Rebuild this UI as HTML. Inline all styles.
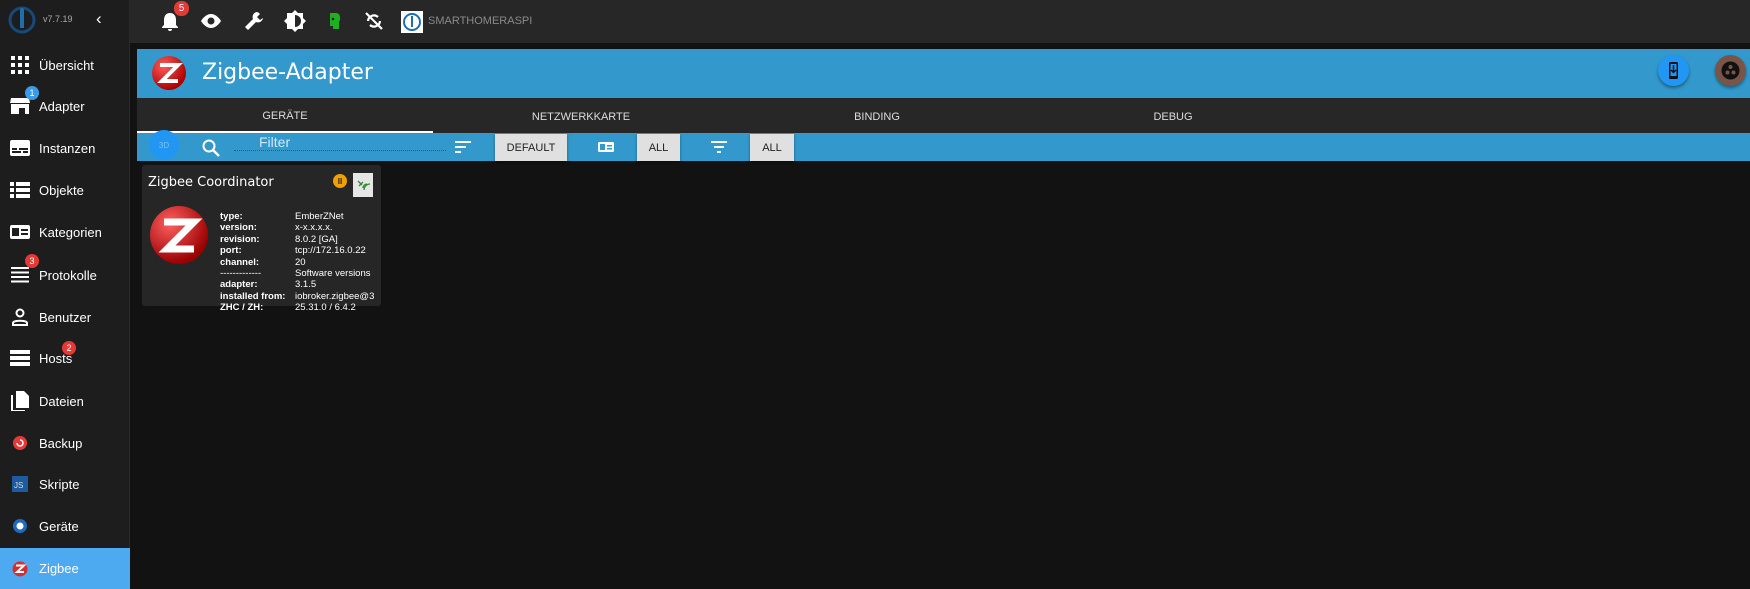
<!DOCTYPE html>
<html><head><meta charset="utf-8"><style>
*{box-sizing:border-box;margin:0;padding:0}
body{width:1750px;height:589px;background:#121212;font-family:"Liberation Sans",sans-serif;position:relative;overflow:hidden;color:#fff}
.side{position:absolute;left:0;top:0;width:130px;height:589px;background:#1d1d1d;border-right:1px solid #2a2a2a}
.item{position:absolute;left:0;width:130px;height:42px;display:flex;align-items:center;font-size:13px;color:#fff}
.item .ic{width:20px;height:18px;margin-left:10px;margin-right:9px;display:flex;align-items:center;justify-content:center}
.badge{position:absolute;width:14px;height:14px;border-radius:7px;font-size:9px;display:flex;align-items:center;justify-content:center;color:#fff}
.top{position:absolute;left:130px;top:0;right:0;height:43px;background:#272727}
.hdr{position:absolute;left:137px;top:49px;right:0;height:49px;background:#3399cc}
.tabs{position:absolute;left:137px;top:98px;right:0;height:35px;background:#272727}
.tab{position:absolute;top:2px;width:296px;height:33px;display:flex;align-items:center;justify-content:center;font-size:11px;color:#ddd}
.tool{position:absolute;left:137px;top:133px;right:0;height:28px;background:#3399cc}
.btn{position:absolute;top:134px;height:27px;background:#e0e0e0;color:#222;font-size:11px;display:flex;align-items:center;justify-content:center;box-shadow:0 1px 3px rgba(0,0,0,.4)}
.card{position:absolute;left:142px;top:165px;width:239px;height:141px;background:#262626;border-radius:3px}
.kv{position:absolute;font-size:9.5px;line-height:11.4px;white-space:nowrap}
</style></head><body>
<div class="side">
 <svg style="position:absolute;left:8px;top:6px" width="28" height="28" viewBox="0 0 28 28"><circle cx="14" cy="14" r="12" fill="none" stroke="#164a7a" stroke-width="3"/><rect x="12" y="5" width="4" height="17" fill="#1d6fb0"/><circle cx="14" cy="4" r="2" fill="#1d6fb0"/></svg>
 <div style="position:absolute;left:43px;top:14px;font-size:9px;color:#aaa">v7.7.19</div>
 <div style="position:absolute;left:96px;top:9px;font-size:17px;color:#fff">‹</div>
 <div class="item" style="top:44px"><div class="ic"><svg width="18" height="18"><g fill="#fff"><rect x="0" y="0" width="4" height="4"/><rect x="7" y="0" width="4" height="4"/><rect x="14" y="0" width="4" height="4"/><rect x="0" y="7" width="4" height="4"/><rect x="7" y="7" width="4" height="4"/><rect x="14" y="7" width="4" height="4"/><rect x="0" y="14" width="4" height="4"/><rect x="7" y="14" width="4" height="4"/><rect x="14" y="14" width="4" height="4"/></g></svg></div>Übersicht</div>
 <div class="item" style="top:85px"><div class="ic"><svg width="20" height="16"><path d="M1 0h18l1 5H0z M1 6h18v10h-4v-6H9v6H1z" fill="#fff"/></svg></div>Adapter</div>
 <div class="badge" style="left:25px;top:86px;background:#3a9be8">1</div>
 <div class="item" style="top:127px"><div class="ic"><svg width="20" height="16"><rect width="20" height="16" rx="2" fill="#fff"/><rect x="2" y="8" width="5" height="2" fill="#1d1d1d"/><rect x="9" y="8" width="9" height="2" fill="#1d1d1d"/><rect x="2" y="11" width="9" height="2" fill="#1d1d1d"/><rect x="13" y="11" width="5" height="2" fill="#1d1d1d"/></svg></div>Instanzen</div>
 <div class="item" style="top:169px"><div class="ic"><svg width="20" height="16" fill="#fff"><rect x="0" y="0" width="4" height="4"/><rect x="6" y="0" width="14" height="4"/><rect x="0" y="6" width="4" height="4"/><rect x="6" y="6" width="14" height="4"/><rect x="0" y="12" width="4" height="4"/><rect x="6" y="12" width="14" height="4"/></svg></div>Objekte</div>
 <div class="item" style="top:211px"><div class="ic"><svg width="20" height="14"><rect width="20" height="14" rx="2" fill="#fff"/><rect x="2" y="3" width="7" height="8" fill="#1d1d1d"/><rect x="11" y="4" width="7" height="2" fill="#1d1d1d"/><rect x="11" y="8" width="7" height="2" fill="#1d1d1d"/></svg></div>Kategorien</div>
 <div class="item" style="top:254px"><div class="ic"><svg width="18" height="16" fill="#fff"><rect y="0" width="18" height="2"/><rect y="4.5" width="18" height="2"/><rect y="9" width="18" height="2"/><rect y="13.5" width="18" height="2"/></svg></div>Protokolle</div>
 <div class="badge" style="left:25px;top:254px;background:#e53935">3</div>
 <div class="item" style="top:296px"><div class="ic"><svg width="18" height="18"><circle cx="9" cy="5" r="3.5" fill="none" stroke="#fff" stroke-width="2"/><path d="M2 17v-2c0-3 14-3 14 0v2z" fill="none" stroke="#fff" stroke-width="2"/></svg></div>Benutzer</div>
 <div class="item" style="top:337px"><div class="ic"><svg width="20" height="16" fill="#fff"><rect y="0" width="20" height="4"/><rect y="6" width="20" height="4"/><rect y="12" width="20" height="4"/></svg></div>Hosts</div>
 <div class="badge" style="left:62px;top:341px;background:#e53935">2</div>
 <div class="item" style="top:380px"><div class="ic"><svg width="18" height="20"><path d="M5 0h8l5 5v12H5z" fill="#fff"/><path d="M1 4v16h13" fill="none" stroke="#fff" stroke-width="2"/></svg></div>Dateien</div>
 <div class="item" style="top:422px"><div class="ic"><svg width="16" height="16"><circle cx="8" cy="8" r="7" fill="#e53935"/><path d="M5 8a3 3 0 1 0 3-3" fill="none" stroke="#fff" stroke-width="1.5"/></svg></div>Backup</div>
 <div class="item" style="top:463px"><div class="ic"><svg width="16" height="16"><rect width="16" height="16" fill="#1e5aa0"/><text x="2" y="12" font-size="8" fill="#ddd" font-family="Liberation Sans">JS</text></svg></div>Skripte</div>
 <div class="item" style="top:505px"><div class="ic"><svg width="16" height="16"><circle cx="8" cy="8" r="7" fill="#1e6ac0"/><circle cx="8" cy="8" r="3.5" fill="#fff"/></svg></div>Geräte</div>
 <div class="item" style="top:548px;height:41px;background:#4eaaf0"><div class="ic"><svg width="16" height="16"><circle cx="8" cy="8" r="7.5" fill="#d32f2f"/><path d="M4 4.5h8L5 11h7" fill="none" stroke="#fff" stroke-width="2"/></svg></div>Zigbee</div>
</div>
<div class="top">
 <svg style="position:absolute;left:30px;top:11px" width="20" height="21"><path d="M10 2c-4 0-6 3-6 7v5l-2 2v1h16v-1l-2-2V9c0-4-2-7-6-7zM8 18a2 2 0 0 0 4 0z" fill="#fff"/></svg>
 <div class="badge" style="left:44px;top:1px;width:15px;height:15px;background:#e53935;font-size:10px">5</div>
 <svg style="position:absolute;left:69px;top:12px" width="24" height="18"><path d="M12 2C6 2 2 9 2 9s4 7 10 7 10-7 10-7-4-7-10-7z" fill="#fff"/><circle cx="12" cy="9" r="3.5" fill="#272727"/></svg>
 <svg style="position:absolute;left:113px;top:10px" width="22" height="22"><path d="M14 2a5 5 0 0 0-4 7L2 17l3 3 8-8a5 5 0 0 0 7-4l-3 2-3-3 3-3a5 5 0 0 0-3-2z" fill="#fff"/></svg>
 <svg style="position:absolute;left:154px;top:10px" width="22" height="22"><path d="M11 0l3 3h5v5l3 3-3 3v5h-5l-3 3-3-3H3v-5l-3-3 3-3V3h5z" fill="#fff"/><path d="M11 5a6 6 0 0 1 0 12z" fill="#272727"/></svg>
 <svg style="position:absolute;left:197px;top:11px" width="14" height="20"><path d="M3 2h6a4 4 0 0 1 4 4v3l-1 2v7H6v-3H3z" fill="#1db21d"/><circle cx="6" cy="8" r="1.2" fill="#000"/></svg>
 <svg style="position:absolute;left:234px;top:11px" width="20" height="20"><path d="M4 10a6 6 0 0 1 10-4M16 10a6 6 0 0 1-10 4M2 2l16 16" fill="none" stroke="#fff" stroke-width="2.2"/></svg>
 <div style="position:absolute;left:271px;top:11px;width:22px;height:22px;background:#fff"><svg width="22" height="22"><circle cx="11" cy="11" r="8" fill="none" stroke="#1d6fb0" stroke-width="2"/><rect x="10" y="5" width="2" height="11" fill="#1d6fb0"/></svg></div>
 <div style="position:absolute;left:298px;top:15px;font-size:11px;color:#8a8a8a">SMARTHOMERASPI</div>
</div>
<div class="hdr">
 <svg style="position:absolute;left:14px;top:6px" width="36" height="36"><defs><radialGradient id="g" cx="35%" cy="30%" r="70%"><stop offset="0" stop-color="#ff5a5a"/><stop offset="1" stop-color="#a00"/></radialGradient></defs><circle cx="18" cy="18" r="17" fill="url(#g)"/><path d="M9 10h18L11 26h16" fill="none" stroke="#fff" stroke-width="4"/></svg>
 <div style="position:absolute;left:65px;top:11px;font-size:22px;color:#fff;font-family:'DejaVu Sans',sans-serif">Zigbee-Adapter</div>
 <div style="position:absolute;left:1521px;top:6px;width:31px;height:31px;border-radius:50%;background:#2196f3;box-shadow:0 2px 3px rgba(0,0,0,.4)"><svg width="31" height="31"><rect x="11" y="7" width="9" height="17" rx="1.5" fill="#111"/><rect x="12.5" y="9" width="6" height="12" fill="#2196f3"/><path d="M15.5 10v7M13 15l2.5 2.5L18 15" stroke="#111" fill="none" stroke-width="1.5"/></svg></div>
 <div style="position:absolute;left:1578px;top:6px;width:31px;height:31px;border-radius:50%;background:#795548;box-shadow:0 2px 3px rgba(0,0,0,.4)"><svg width="31" height="31"><circle cx="15.5" cy="15.5" r="9" fill="#111"/><circle cx="15.5" cy="12" r="2" fill="#795548"/><circle cx="12.5" cy="17.5" r="2" fill="#795548"/><circle cx="18.5" cy="17.5" r="2" fill="#795548"/></svg></div>
</div>
<div class="tabs">
 <div class="tab" style="left:0;border-bottom:2px solid #fff">GERÄTE</div>
 <div class="tab" style="left:296px">NETZWERKKARTE</div>
 <div class="tab" style="left:592px">BINDING</div>
 <div class="tab" style="left:888px">DEBUG</div>
</div>
<div class="tool">
 <div style="position:absolute;left:12px;top:-3px;width:30px;height:30px;border-radius:50%;background:#2196f3;font-size:8px;color:#7cc0f8;display:flex;align-items:center;justify-content:center">3D</div>
 <svg style="position:absolute;left:64px;top:5px" width="20" height="20"><circle cx="8" cy="8" r="5.5" fill="none" stroke="#fff" stroke-width="2"/><path d="M12 12l6 6" stroke="#fff" stroke-width="2.4"/></svg>
 <div style="position:absolute;left:97px;top:-2px;width:212px;height:20px;border-bottom:1px dotted #1f5f8a"></div>
 <div style="position:absolute;left:122px;top:1px;font-size:14px;color:#cfe6f5">Filter</div>
 <svg style="position:absolute;left:318px;top:8px" width="16" height="12" fill="#fff"><rect width="16" height="2"/><rect y="5" width="11" height="2"/><rect y="10" width="6" height="2"/></svg>
 <svg style="position:absolute;left:461px;top:9px" width="16" height="10"><rect width="16" height="10" rx="1.5" fill="#fff"/><rect x="2" y="2" width="5" height="6" fill="#3399cc"/><rect x="9" y="3" width="5" height="1.5" fill="#3399cc"/><rect x="9" y="6" width="5" height="1.5" fill="#3399cc"/></svg>
 <svg style="position:absolute;left:574px;top:8px" width="16" height="12" fill="#fff"><rect width="16" height="2"/><rect x="3" y="5" width="10" height="2"/><rect x="6" y="10" width="4" height="2"/></svg>
</div>
<div class="btn" style="left:495px;width:72px">DEFAULT</div>
<div class="btn" style="left:637px;width:43px">ALL</div>
<div class="btn" style="left:750px;width:44px">ALL</div>
<div class="card">
 <div style="position:absolute;left:6px;top:10px;font-size:13px;font-family:'DejaVu Sans',sans-serif">Zigbee Coordinator</div>
 <div style="position:absolute;left:191px;top:9px;width:14px;height:14px;border-radius:50%;background:#f0a000;font-size:8px;color:#222;display:flex;align-items:center;justify-content:center;font-weight:bold">II</div>
 <div style="position:absolute;left:211px;top:8px;width:20px;height:24px;background:#e6e6e6"><svg width="20" height="24"><path d="M5 8l4 4M6 13l4-4M10 15a4 4 0 0 1 4-4M11 17a6 6 0 0 1 6-6" stroke="#2e8b2e" stroke-width="1.3" fill="none"/></svg></div>
 <svg style="position:absolute;left:7px;top:40px" width="60" height="60"><defs><radialGradient id="g2" cx="35%" cy="30%" r="70%"><stop offset="0" stop-color="#ff6060"/><stop offset="1" stop-color="#9a0000"/></radialGradient></defs><circle cx="30" cy="30" r="29" fill="url(#g2)"/><path d="M15 17h30L18 44h27" fill="none" stroke="#fff" stroke-width="7"/></svg>
 <div class="kv" style="left:78px;top:46px;font-weight:bold">type:<br>version:<br>revision:<br>port:<br>channel:<br><span style="font-weight:normal">-------------</span><br>adapter:<br>installed from:<br>ZHC / ZH:</div>
 <div class="kv" style="left:153px;top:46px;width:85px;overflow:hidden">EmberZNet<br>x-x.x.x.x.<br>8.0.2 [GA]<br>tcp://172.16.0.22<br>20<br>Software versions<br>3.1.5<br>iobroker.zigbee@3<br>25.31.0 / 6.4.2</div>
</div>
</body></html>
